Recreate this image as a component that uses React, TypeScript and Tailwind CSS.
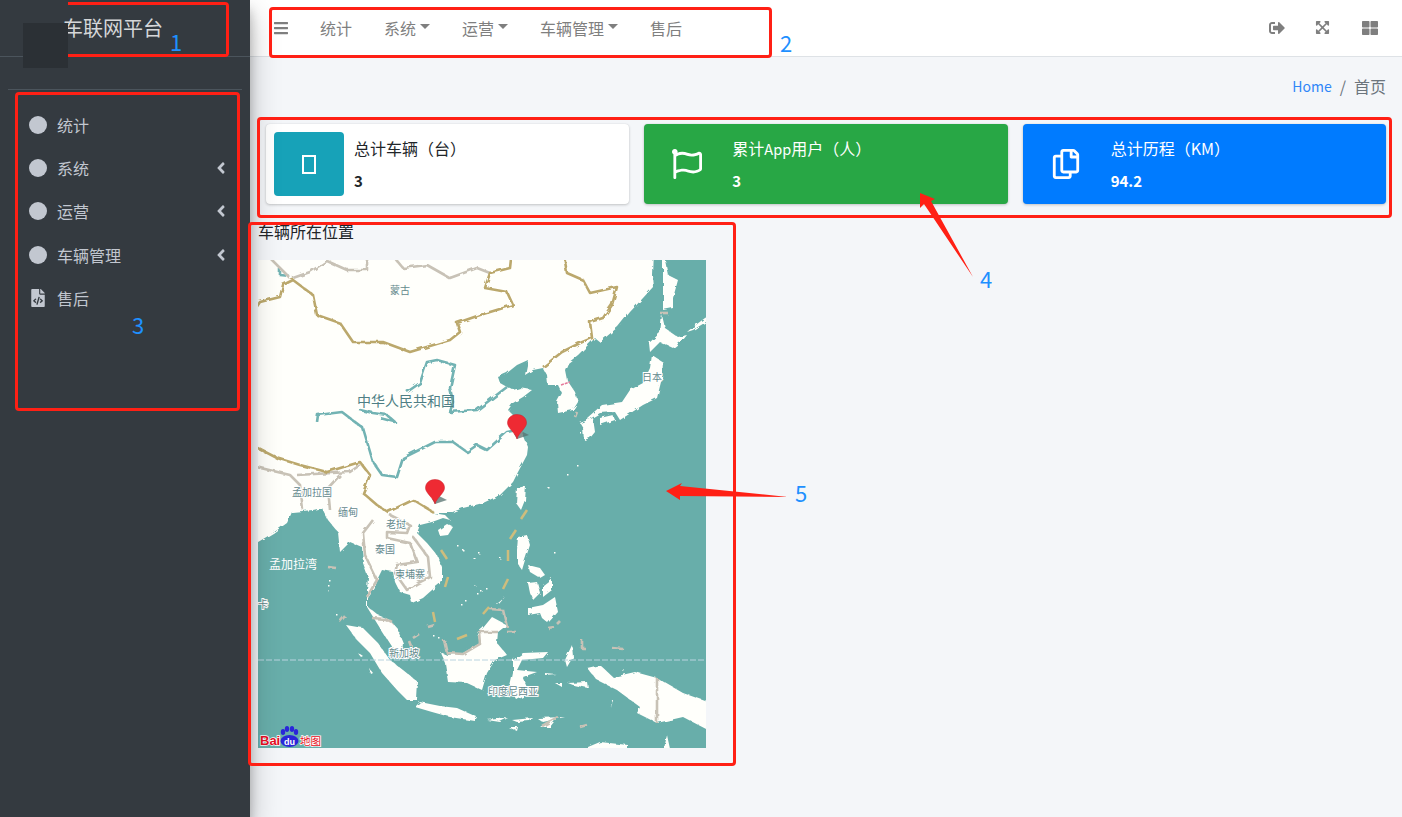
import React from "react";
import { FaBars, FaSignOutAlt, FaExpandArrowsAlt, FaThLarge, FaAngleLeft, FaFileCode, FaRegFlag, FaRegCopy } from "react-icons/fa";

const land: string[] = [
  "-10,-10 395,-10 394,15 395,27 385,38 372,52 360,67 342,82 337,78 330,85 320,95 310,103 307,110 309,120 317,132 320,142 315,150 300,153 299,142 304,133 300,125 290,125 289,115 285,108 275,110 267,115 270,100 259,105 249,113 240,117 242,123 249,127 255,130 262,128 274,130 265,137 255,143 250,150 255,155 264,172 270,187 269,195 260,212 255,222 242,235 225,243 205,248 192,253 175,253 187,255 192,260 185,258 174,262 162,265 159,273 169,283 179,295 184,307 184,322 174,330 165,338 154,343 152,335 142,332 137,322 135,312 124,310 120,318 117,328 110,338 110,347 120,355 132,360 139,368 145,383 144,392 134,387 125,373 117,360 109,347 109,330 110,317 105,303 104,287 92,282 82,292 80,272 70,260 64,248 55,250 34,252 29,263 15,273 -10,288",
  "405,-10 410,15 420,20 415,38 415,48 405,50 405,28",
  "429,72 435,67 447,58 458,52 458,56 435,70",
  "404,55 407,68 420,77 429,75 425,80 415,88 402,82 392,92 391,83 402,73",
  "394,95 405,102 404,118 399,138 385,145 362,160 357,152 342,153 330,160 329,158 344,145 364,142 372,130 385,123 392,108",
  "322,163 335,158 337,172 332,178 326,180 325,168",
  "342,158 355,155 357,160 342,165",
  "259,228 268,226 267,240 263,250 258,243",
  "180,270 189,264 195,267 190,275 182,276",
  "88,365 105,368 120,383 132,400 145,410 160,422 159,440 149,440 139,430 124,413 112,393 99,380",
  "157,447 162,442 182,446 199,448 219,457 217,461 192,457 174,452",
  "182,392 189,395 205,393 222,383 219,373 225,368 234,357 249,365 240,372 239,383 249,395 237,400 229,413 224,430 209,423 190,422 187,403",
  "255,400 265,393 290,392 285,398 264,400 259,410 279,412 265,417 272,433 259,440 252,427 255,413",
  "329,408 342,405 355,417 377,412 399,418 425,433 458,445 458,474 425,457 399,463 379,453 382,447 359,430 339,420",
  "260,277 269,275 272,285 267,300 264,310 259,303 259,290",
  "270,323 279,322 282,333 275,340 272,333",
  "285,325 294,318 294,330 285,337",
  "270,305 282,308 287,315 282,318 272,312",
  "270,348 285,345 297,337 300,352 290,363 284,358 282,353 270,355",
  "239,344 247,337 240,345",
  "307,400 314,385 315,397 309,407",
  "229,460 250,458 242,462",
  "254,460 275,458 272,461 259,462",
  "279,458 307,457 285,462",
  "282,467 299,458 292,467",
  "250,467 260,467 259,471",
  "330,487 342,482 370,485 370,498 330,498",
  "404,498 409,475 414,498",
  "310,423 329,422 330,428 315,425",
  "297,423 304,423 304,427",
  "287,413 298,414 287,415",
  "354,440 355,440 353,448",
  "100,393 106,397 104,398",
  "111,408 115,413 113,414",
];

const dots: [number, number][] = [
  [199, 285], [205, 290], [220, 292], [215, 297], [242, 298], [217, 325], [222, 330], [228, 328], [219, 333],
  [207, 340], [202, 343], [71, 320], [70, 325], [69, 330], [78, 354], [175, 375], [181, 378], [322, 172],
  [296, 292], [319, 205], [310, 215], [290, 227], [345, 418], [365, 410],
];

const tan = [
  "-10,60 2,42 22,37 25,25 35,20 55,35 59,55 82,63 95,82 125,82 152,92 192,80 202,72 199,63 222,55 255,45 249,32 227,28 232,13 252,8 254,-10",
  "305,-10 309,13 325,20 332,33 359,27 354,45 345,58 332,62 334,78 322,83 304,92 285,107",
  "-10,183 19,198 42,205 69,212 102,202 112,215 105,233 119,245 130,252 155,240 175,252",
];

const grey = [
  "4,-10 22,8 32,18",
  "35,18 52,12 69,1 89,10 109,10 109,-5",
  "130,-10 145,8 169,5 192,18 219,8 232,13",
  "-10,205 32,215 42,225 45,250",
  "39,215 92,212 102,205",
  "72,250 70,228 82,215",
  "115,260 105,273 107,295 119,320 109,337",
  "132,255 152,265 149,273 129,272 129,278 152,283 159,302 139,305 137,313 149,330 160,323 172,317 170,297 155,277",
  "114,358 127,359 135,363",
  "186,380 189,393 205,394 222,384 221,372 240,372",
  "232,349 245,350 249,367",
  "70,307 78,308",
  "87,356 82,362",
  "177,365 170,367",
  "161,374 155,378",
  "152,382 154,387",
  "249,372 258,372",
  "290,368 296,367",
  "302,361 299,364",
  "324,380 324,388 327,388",
  "354,388 365,389",
  "322,467 329,465",
  "402,53 410,53",
  "319,152 317,157",
  "399,418 399,463",
  "284,466 300,457",
];

const dashes = [
  "269,250 263,259",
  "258,270 252,279",
  "250,290 250,301",
  "250,319 245,329",
  "231,347 225,354",
  "190,317 187,327",
  "183,290 189,299",
  "175,352 177,362",
  "199,379 209,375",
];

const rivers = [
  "149,132 162,123 169,102 179,100 197,105 192,128 195,142 192,152 219,150 249,127",
  "102,150 115,153 129,155 137,162 122,158",
  "59,162 60,155 84,152 105,168 115,202 124,215 139,217 145,198 177,182 195,182 209,192 219,185 229,190 249,172 259,170",
  "22,8 22,15 32,16",
];

const labels: { x: number; y: number; t: string; s: number; c: string; halo?: boolean }[] = [
  { x: 142, y: 34, t: "蒙古", s: 10, c: "#64898c" },
  { x: 148, y: 146, t: "中华人民共和国", s: 14, c: "#4f7f85" },
  { x: 394, y: 121, t: "日本", s: 10, c: "#64898c", halo: true },
  { x: 54, y: 236, t: "孟加拉国", s: 10, c: "#64898c", halo: true },
  { x: 90, y: 256, t: "缅甸", s: 10, c: "#64898c", halo: true },
  { x: 138, y: 268, t: "老挝", s: 10, c: "#64898c", halo: true },
  { x: 127, y: 293, t: "泰国", s: 10, c: "#64898c", halo: true },
  { x: 152, y: 318, t: "柬埔寨", s: 10, c: "#64898c", halo: true },
  { x: 146, y: 397, t: "新加坡", s: 10, c: "#64898c", halo: true },
  { x: 255, y: 435, t: "印度尼西亚", s: 10, c: "#64898c", halo: true },
  { x: 5, y: 348, t: "卡", s: 10, c: "#64898c", halo: true },
];

function Pin({ x, y }: { x: number; y: number }) {
  return (
    <g transform={`translate(${x} ${y})`}>
      <path d="M0 0 L12 -4 L4 -8 L-3 -5 Z" fill="#55716f" opacity="0.75" />
      <path d="M0 0 C-1.5 -6 -9.5 -11 -9.5 -16 C-9.5 -21.5 -5 -24.5 0 -24.5 C5 -24.5 9.5 -21.5 9.5 -16 C9.5 -11 1.5 -6 0 0 Z" fill="#ee2a33" stroke="#c8202a" strokeWidth="0.5" />
    </g>
  );
}

function MapArt() {
  return (
    <svg width="448" height="488" viewBox="0 0 448 488" className="block">
      <defs>
        <filter id="rough" filterUnits="userSpaceOnUse" x="-12" y="-12" width="472" height="512">
          <feTurbulence type="fractalNoise" baseFrequency="0.14" numOctaves="2" seed="4" />
          <feDisplacementMap in="SourceGraphic" scale="4" />
        </filter>
      </defs>
      <rect width="448" height="488" fill="#68aeaa" />
      <g filter="url(#rough)">
        {land.map((p, i) => <polygon key={i} points={p} fill="#fffffb" />)}
        {dots.map(([x, y], i) => <rect key={i} x={x} y={y} width="1.5" height="1.5" fill="#fffffb" />)}
        {rivers.map((p, i) => <polyline key={i} points={p} fill="none" stroke="#72b3b3" strokeWidth="2.6" strokeLinejoin="round" />)}
        {grey.map((p, i) => <polyline key={i} points={p} fill="none" stroke="#c8c2b6" strokeWidth="2.6" strokeLinejoin="round" />)}
        {tan.map((p, i) => <polyline key={i} points={p} fill="none" stroke="#bba86c" strokeWidth="2.6" strokeLinejoin="round" />)}
      </g>
      <line x1="0" y1="400" x2="448" y2="400" stroke="#b9d4e0" strokeWidth="1" strokeDasharray="6 2" />
      {dashes.map((p, i) => <polyline key={i} points={p} fill="none" stroke="#cfbd7d" strokeWidth="2.5" />)}
      <polyline points="303,125 312,122" fill="none" stroke="#e77a9b" strokeWidth="1.5" strokeDasharray="3 1" />
      {labels.map((l) => (
        <text key={l.t} x={l.x} y={l.y} fontSize={l.s} fill={l.c} textAnchor="middle" stroke={l.halo ? "#ffffff" : "none"} strokeWidth={l.halo ? 2 : 0} className="[paint-order:stroke]">{l.t}</text>
      ))}
      <text x="35" y="309" fontSize="12" fill="#ffffff" textAnchor="middle">孟加拉湾</text>
      <Pin x={259} y={179} />
      <Pin x={177} y={244} />
      <g>
        <text x="2" y="485" fontSize="13" fontWeight="700" fill="#e60f24" stroke="#ffffff" strokeWidth="1.5" className="[paint-order:stroke] font-['Liberation_Sans',sans-serif]">Bai</text>
        <g fill="#2a26d9">
          <ellipse cx="25" cy="472" rx="2.2" ry="3" />
          <ellipse cx="29" cy="469" rx="2.2" ry="3" />
          <ellipse cx="34" cy="469" rx="2.2" ry="3" />
          <ellipse cx="38" cy="472" rx="2.2" ry="3" />
          <ellipse cx="31.5" cy="481" rx="9" ry="6" />
        </g>
        <text x="31.5" y="485" fontSize="9" fontWeight="700" fill="#ffffff" textAnchor="middle" className="font-['Liberation_Sans',sans-serif]">du</text>
        <text x="42" y="485" fontSize="10.5" fill="#e60f24" stroke="#ffffff" strokeWidth="1.5" className="[paint-order:stroke]">地图</text>
      </g>
    </svg>
  );
}

function NavLink({ label, caret }: { label: string; caret?: boolean }) {
  return (
    <a className="flex items-center px-4 text-[#7f7f7f]">
      <span>{label}</span>
      {caret && <span className="mb-[3px] ml-1 h-0 w-0 border-x-[5px] border-t-[5px] border-x-transparent border-t-[#7f7f7f]" />}
    </a>
  );
}

function SideItem({ label, arrow }: { label: string; arrow?: boolean }) {
  return (
    <li className="flex h-[43.33px] items-center pl-[29px] pr-[20px]">
      <span className="h-[18px] w-[18px] rounded-full bg-[#c2c7d0]" />
      <span className="ml-[10px] flex-1">{label}</span>
      {arrow && <FaAngleLeft className="text-[18px]" />}
    </li>
  );
}

function InfoCard({ bg, icon, title, value, dark }: { bg: string; icon: React.ReactNode; title: React.ReactNode; value: string; dark?: boolean }) {
  return (
    <div className={`flex h-20 rounded p-2 shadow-[0_0_1px_rgba(0,0,0,0.125),0_1px_3px_rgba(0,0,0,0.2)] ${bg} ${dark ? "text-white" : "text-[#212529]"}`}>
      {icon}
      <div className="flex flex-col justify-center px-[10px] leading-[1.8]">
        <span>{title}</span>
        <span className="mt-1 text-[15px] font-bold">{value}</span>
      </div>
    </div>
  );
}

function Num({ className, n }: { className: string; n: string }) {
  return <span className={`absolute z-30 text-[22px] leading-none text-[#1e90ff] ${className}`}>{n}</span>;
}

export default function App() {
  return (
    <div className="relative flex h-[817px] w-[1402px] overflow-hidden bg-[#f4f6f9] font-['Noto_Sans_CJK_SC',sans-serif] text-[16px] text-[#212529]">
      <aside className="relative z-10 w-[250px] shrink-0 bg-[#343a40] text-[#c2c7d0] shadow-[0_14px_28px_rgba(0,0,0,0.25),0_10px_10px_rgba(0,0,0,0.22)]">
        <div className="flex h-[57px] items-center border-b border-[#4b545c] pl-[63px] text-[20px] text-[#d6d7d9]">
          <span className="-mt-px">车联网平台</span>
        </div>
        <div className="absolute left-[23px] top-[23px] h-[45px] w-[45px] bg-[#2b3035]" />
        <div className="mx-2 h-[33px] border-b border-[#4b545c]" />
        <ul className="mt-[13px]">
          <SideItem label="统计" />
          <SideItem label="系统" arrow />
          <SideItem label="运营" arrow />
          <SideItem label="车辆管理" arrow />
          <li className="flex h-[43.33px] items-center pl-[29px]">
            <FaFileCode className="text-[18px]" />
            <span className="ml-[10px]">售后</span>
          </li>
        </ul>
      </aside>

      <div className="flex min-w-0 flex-1 flex-col">
        <header className="flex h-[57px] shrink-0 items-stretch justify-between border-b border-[#dee2e6] bg-white px-2 pb-[1px]">
          <nav className="flex">
            <a className="flex items-center px-4 text-[#7f7f7f]"><FaBars className="w-[14px] text-[16px]" /></a>
            <NavLink label="统计" />
            <NavLink label="系统" caret />
            <NavLink label="运营" caret />
            <NavLink label="车辆管理" caret />
            <NavLink label="售后" />
          </nav>
          <div className="flex items-center text-[#7f7f7f]">
            <a className="pl-4 pr-[14px]"><FaSignOutAlt className="text-[16px]" /></a>
            <a className="px-4"><FaExpandArrowsAlt className="text-[15px]" /></a>
            <a className="px-4"><FaThLarge className="text-[16px]" /></a>
          </div>
        </header>

        <main className="flex flex-col px-4 pt-[17px]">
          <div className="flex h-6 items-center justify-end text-[#6c757d]">
            <span className="mt-px text-[14px] text-[#2f86f8]">Home</span>
            <span className="px-2">/</span>
            <span>首页</span>
          </div>
          <div className="mt-[26px] grid grid-cols-3 gap-[15px]">
            <InfoCard
              bg="bg-white"
              title="总计车辆（台）"
              value="3"
              icon={
                <span className="flex w-[70px] shrink-0 items-center justify-center rounded bg-[#17a2b8]">
                  <span className="h-[19px] w-[14px] border-2 border-white" />
                </span>
              }
            />
            <InfoCard
              bg="bg-[#28a745]"
              dark
              title={<>累计<span className="text-[14.5px]">App</span>用户（人）</>}
              value="3"
              icon={<span className="flex w-[70px] shrink-0 items-center justify-center text-[30px]"><FaRegFlag /></span>}
            />
            <InfoCard
              bg="bg-[#007bff]"
              dark
              title="总计历程（KM）"
              value="94.2"
              icon={<span className="flex w-[70px] shrink-0 items-center justify-center text-[30px]"><FaRegCopy /></span>}
            />
          </div>
          <section className="-ml-2 mt-4">
            <h2 className="-mt-px leading-6">车辆所在位置</h2>
            <div className="mt-[17px]"><MapArt /></div>
          </section>
        </main>
      </div>

      {/* annotations drawn over the screenshot */}
      <div className="absolute left-[68px] top-[2px] z-30 h-[55px] w-[161px] rounded-r-sm border-y-[3px] border-r-[3px] border-[#ff2015]" />
      <div className="absolute left-[269px] top-[7px] z-30 h-[51px] w-[503px] rounded-sm border-[3px] border-[#ff2015]" />
      <div className="absolute left-[15px] top-[92px] z-30 h-[319px] w-[225px] rounded-sm border-[3px] border-[#ff2015]" />
      <div className="absolute left-[257px] top-[117px] z-30 h-[101px] w-[1135px] rounded-sm border-[3px] border-[#ff2015]" />
      <div className="absolute left-[248px] top-[222px] z-30 h-[544px] w-[488px] rounded-sm border-[3px] border-[#ff2015]" />
      <svg className="absolute left-0 top-0 z-30" width="1402" height="817" fill="#ff2015">
        <polygon points="973,277 931,201 935,199 920,193 920,208 924,204" />
        <polygon points="788,497 680,486 682,483 666,491 680,500 680,496" />
      </svg>
      <Num className="left-[170px] top-[30px]" n="1" />
      <Num className="left-[780px] top-[31px]" n="2" />
      <Num className="left-[132px] top-[313px]" n="3" />
      <Num className="left-[980px] top-[267px]" n="4" />
      <Num className="left-[795px] top-[481px]" n="5" />
    </div>
  );
}
